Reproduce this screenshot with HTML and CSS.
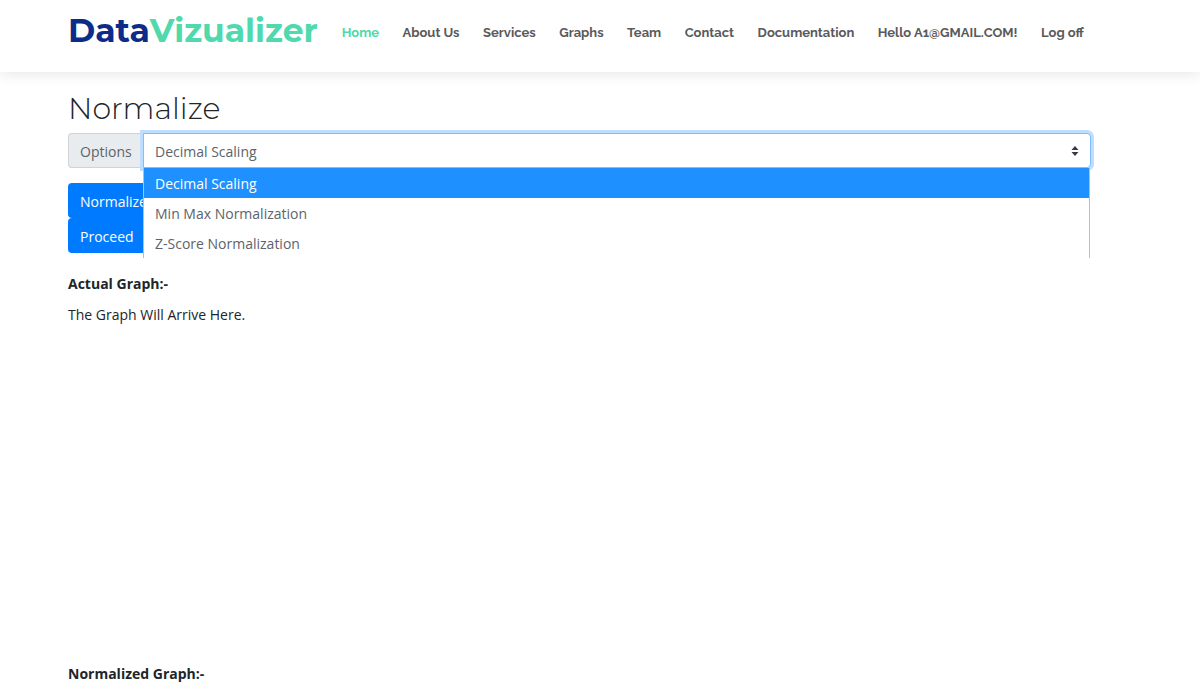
FILE: index.html
```html
<!DOCTYPE html>
<html lang="en">
<head>
<meta charset="utf-8">
<meta name="viewport" content="width=device-width, initial-scale=1">
<title>Normalize - DataVizualizer</title>
<link rel="stylesheet" href="styles.css">
</head>
<body>
<header class="header">
  <a class="logo" href="#">Data<span class="logo-accent">Vizualizer</span></a>
  <nav class="nav">
    <a class="nav-link active" href="#">Home</a>
    <a class="nav-link" href="#">About Us</a>
    <a class="nav-link" href="#">Services</a>
    <a class="nav-link" href="#">Graphs</a>
    <a class="nav-link" href="#">Team</a>
    <a class="nav-link" href="#">Contact</a>
    <a class="nav-link" href="#">Documentation</a>
    <a class="nav-link" href="#">Hello A1@GMAIL.COM!</a>
    <a class="nav-link" href="#">Log off</a>
  </nav>
</header>
<main class="content">
  <h1 class="title">Normalize</h1>
  <div class="input-group">
    <label class="addon" for="method">Options</label>
    <div class="select-wrap">
      <select class="select" id="method">
        <option>Decimal Scaling</option>
        <option>Min Max Normalization</option>
        <option>Z-Score Normalization</option>
      </select>
      <svg class="caret" viewBox="0 0 8 10" aria-hidden="true"><path d="M4 0 7.5 4H.5zM.5 6h7L4 10z"/></svg>
      <ul class="menu" role="listbox" aria-label="Options">
        <li class="menu-item selected" role="option" aria-selected="true">Decimal Scaling</li>
        <li class="menu-item" role="option" aria-selected="false">Min Max Normalization</li>
        <li class="menu-item" role="option" aria-selected="false">Z-Score Normalization</li>
      </ul>
    </div>
  </div>
  <div class="actions">
    <button class="button" type="button">Normalize</button>
    <button class="button" type="button">Proceed</button>
  </div>
  <section class="graph">
    <h2 class="graph-title">Actual Graph:-</h2>
    <p class="graph-text">The Graph Will Arrive Here.</p>
  </section>
  <section>
    <h2 class="graph-title">Normalized Graph:-</h2>
  </section>
</main>
</body>
</html>
```
FILE: styles.css
```css
* {
  box-sizing: border-box;
}

body {
  margin: 0;
  background: #fff;
  color: #212529;
  font-family: "Segoe UI", "Open Sans", sans-serif;
  font-size: 14px;
  line-height: 22px;
}

.header {
  display: flex;
  align-items: flex-start;
  gap: 24px;
  height: 72px;
  padding: 8px 116px 0 68px;
  background: #fff;
  box-shadow: 0 2px 14px rgba(0, 0, 0, 0.1);
}

.logo {
  color: #0b2c88;
  font-family: Montserrat, Inter, sans-serif;
  font-size: 33px;
  font-weight: 700;
  line-height: 44px;
  text-decoration: none;
}

.logo-accent {
  color: #4fd9ac;
}

.nav {
  display: flex;
  flex: 1;
  justify-content: space-between;
  padding-top: 15px;
}

.nav-link {
  color: #5a5a5c;
  font-family: Raleway, Lato, sans-serif;
  font-size: 13px;
  font-weight: 700;
  line-height: 20px;
  text-decoration: none;
  white-space: nowrap;
}

.nav-link.active {
  color: #4fd9ac;
}

.content {
  padding: 18px 109px 0 68px;
}

.title {
  margin: 0 0 5px;
  font-family: Montserrat, Inter, sans-serif;
  font-size: 30px;
  font-weight: 300;
  line-height: 38px;
}

.input-group {
  display: flex;
  height: 35px;
  margin-bottom: 15px;
}

.addon {
  padding: 7px 11px 5px;
  border: 1px solid #ced4da;
  border-right: 0;
  border-radius: 4px 0 0 4px;
  width: 75px;
  background: #e9ecef;
  color: #5c636a;
}

.select-wrap {
  position: relative;
  flex: 1;
}

.select {
  display: block;
  width: 100%;
  height: 35px;
  padding: 2px 11px 0;
  border: 1px solid #80bdff;
  border-radius: 0 4px 4px 0;
  outline: 0;
  appearance: none;
  background: #fff;
  box-shadow: 0 0 0 3px #bfdeff;
  color: #5c636a;
  font: inherit;
}

.caret {
  position: absolute;
  top: 13px;
  right: 12px;
  width: 8px;
  height: 10px;
  fill: #343a40;
}

.menu {
  position: absolute;
  top: 35px;
  right: 1px;
  left: 0;
  z-index: 1;
  margin: 0;
  padding: 0;
  border: 1px solid #aebfdc;
  border-width: 0 1px;
  background: #fff;
  color: #5c636a;
  list-style: none;
}

.menu-item {
  padding: 5px 11px 3px;
}

.menu-item.selected {
  background: #1e90ff;
  color: #fff;
}

.actions {
  display: flex;
  flex-direction: column;
  align-items: flex-start;
  margin-bottom: 20px;
}

.button {
  height: 35px;
  padding: 2px 12px 0;
  border: 0;
  border-radius: 4px;
  background: #007bff;
  color: #fff;
  font: inherit;
}

.graph {
  min-height: 390px;
}

.graph-title {
  margin: 0 0 9px;
  font-size: 14px;
  font-weight: 700;
  line-height: 22px;
}

.graph-text {
  margin: 0;
}
```
